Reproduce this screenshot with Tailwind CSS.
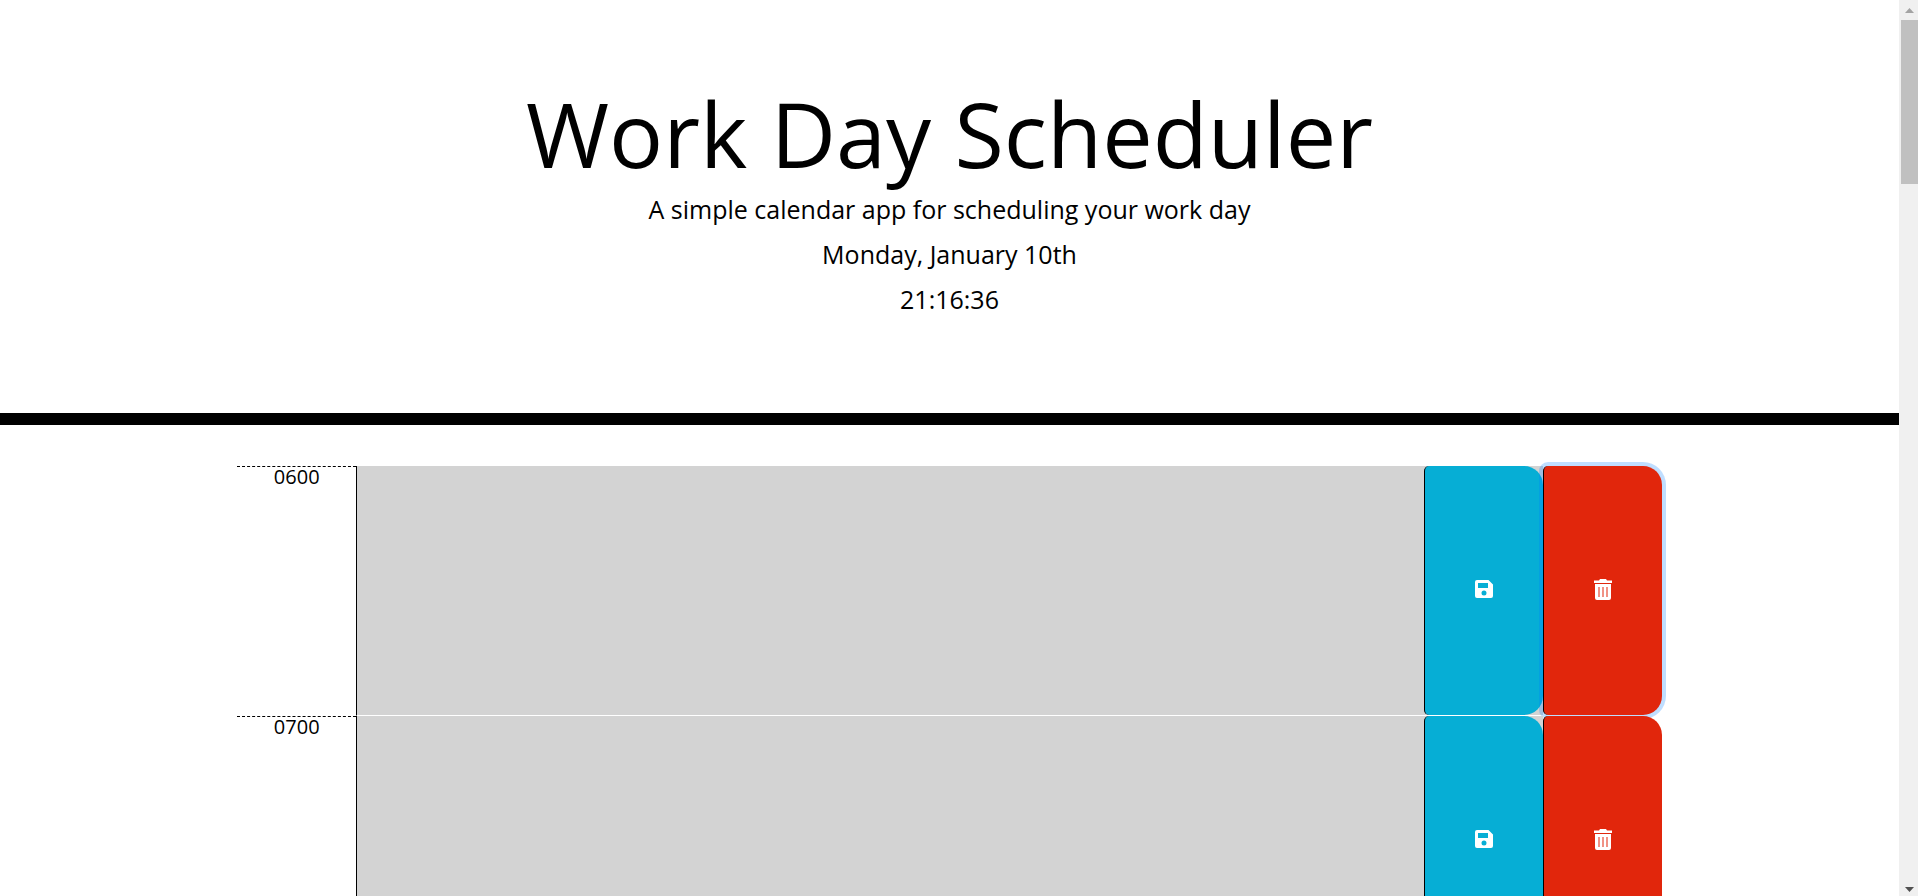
<!DOCTYPE html>
<html lang="en">
<head>
<meta charset="utf-8">
<title>Work Day Scheduler</title>
<script src="https://cdn.jsdelivr.net/npm/@tailwindcss/browser@4"></script>
</head>
<body class="flex h-screen overflow-hidden bg-white font-['Open_Sans',sans-serif] text-black">
<div class="min-w-0 flex-1 overflow-hidden">
  <header class="border-b-12 border-black pt-[79px] pb-[91px] text-center text-[25px] leading-[45px]">
    <h1 class="text-[90px] leading-[108px]">Work Day Scheduler</h1>
    <p>A simple calendar app for scheduling your work day</p>
    <p>Monday, January 10th</p>
    <p>21:16:36</p>
  </header>
  <main class="mx-auto w-3/4 pt-[41px]">
    <section class="grid h-[250px] grid-cols-12">
      <label for="t6" class="border-t border-dashed border-black text-center text-[20px] leading-[20px]">0600</label>
      <textarea id="t6" class="col-span-9 block resize-none border-b border-l border-b-white border-l-black bg-[#d3d3d3] p-2 text-[20px] outline-none"></textarea>
      <div class="border-b border-white bg-[#d3d3d3]">
        <button type="button" aria-label="Save 0600" class="flex h-full w-full items-center justify-center rounded-l-[5px] rounded-r-[19px] border-l border-black bg-[#06aed5]">
          <svg class="size-6" viewBox="0 1 24 24" fill="#fff"><path fill-rule="evenodd" d="M5 2h11.500l4.500 4.500V18a2 2 0 0 1-2 2H5a2 2 0 0 1-2-2V4a2 2 0 0 1 2-2zm1 3v5h10V5zm6 7.500a2.500 2.500 0 1 0 0 5 2.500 2.500 0 0 0 0-5z"/></svg>
        </button>
      </div>
      <div class="border-b border-white">
        <button type="button" aria-label="Delete 0600" class="relative flex h-full w-full items-center justify-center rounded-l-[5px] rounded-r-[19px] border-l border-black bg-[#e1260c] shadow-[0_0_0_4px_rgba(0,123,255,0.25)]">
          <svg class="size-6" viewBox="0 1 24 24" fill="#fff"><path fill-rule="evenodd" d="M3 2.500h5l1-1.500h6l1 1.500h5v2.500H3zM4 6h16V20a2 2 0 0 1-2 2H6a2 2 0 0 1-2-2zM7.500 9v10h1V9zm4 0v10h1V9zm4 0v10h1V9z"/></svg>
        </button>
      </div>
    </section>
    <section class="relative grid h-[250px] grid-cols-12">
      <label for="t7" class="border-t border-dashed border-black text-center text-[20px] leading-[20px]">0700</label>
      <textarea id="t7" class="col-span-9 block resize-none border-b border-l border-b-white border-l-black bg-[#d3d3d3] p-2 text-[20px] outline-none"></textarea>
      <div class="border-b border-white bg-[#d3d3d3]">
        <button type="button" aria-label="Save 0700" class="flex h-full w-full items-center justify-center rounded-l-[5px] rounded-r-[19px] border-l border-black bg-[#06aed5]">
          <svg class="size-6" viewBox="0 1 24 24" fill="#fff"><path fill-rule="evenodd" d="M5 2h11.500l4.500 4.500V18a2 2 0 0 1-2 2H5a2 2 0 0 1-2-2V4a2 2 0 0 1 2-2zm1 3v5h10V5zm6 7.500a2.500 2.500 0 1 0 0 5 2.500 2.500 0 0 0 0-5z"/></svg>
        </button>
      </div>
      <div class="border-b border-white">
        <button type="button" aria-label="Delete 0700" class="flex h-full w-full items-center justify-center rounded-l-[5px] rounded-r-[19px] border-l border-black bg-[#e1260c]">
          <svg class="size-6" viewBox="0 1 24 24" fill="#fff"><path fill-rule="evenodd" d="M3 2.500h5l1-1.500h6l1 1.500h5v2.500H3zM4 6h16V20a2 2 0 0 1-2 2H6a2 2 0 0 1-2-2zM7.500 9v10h1V9zm4 0v10h1V9zm4 0v10h1V9z"/></svg>
        </button>
      </div>
    </section>
  </main>
</div>
<div class="flex w-[19px] flex-col bg-[#f0f0f0] pl-[2px]" aria-hidden="true">
  <div class="flex h-5 items-center justify-center"><svg class="h-[5px] w-[9px]" viewBox="0 0 9 5" fill="#a3a3a3"><path d="M0 5 4.500 0 9 5z"/></svg></div>
  <div class="h-[164px] bg-[#c0c0c0]"></div>
  <div class="mt-auto flex h-[13px] items-center justify-center"><svg class="h-[5px] w-[9px]" viewBox="0 0 9 5" fill="#505050"><path d="M0 0h9L4.500 5z"/></svg></div>
</div>
</body>
</html>
